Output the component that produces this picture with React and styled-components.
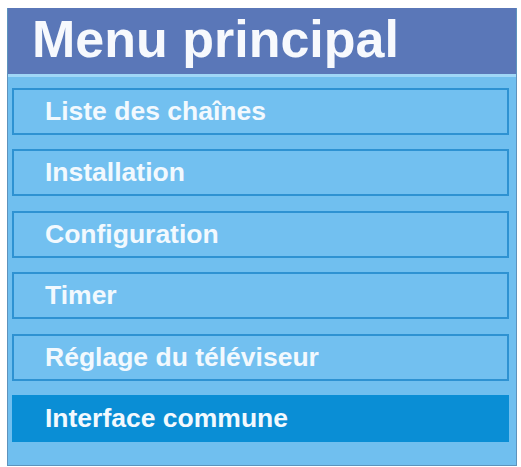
import React from "react";
import styled, { createGlobalStyle } from "styled-components";

const Global = createGlobalStyle`
  html, body { margin: 0; padding: 0; background: #ffffff; }
  body { font-family: "Liberation Sans", Arial, sans-serif; }
`;

const Page = styled.div`
  padding: 8px 0 0 7px;
`;

const Panel = styled.div`
  width: 510px;
  box-sizing: border-box;
  display: flex;
  flex-direction: column;
  background: #70bfef;
  border: 1px solid #5d93bd;
  border-top: none;
`;

const Header = styled.div`
  height: 66px;
  box-sizing: border-box;
  display: flex;
  align-items: center;
  padding: 0 0 4px 24px;
  background: #5a77b8;
  color: #f7f9fd;
  font-size: 52px;
  font-weight: 700;
  white-space: nowrap;
`;

const Divider = styled.div`
  height: 3px;
  background: #9fd7f7;
`;

const List = styled.div`
  display: flex;
  flex-direction: column;
  gap: 14.4px;
  padding: 11px 7px 23px 4px;
`;

const Item = styled.div`
  height: 47px;
  box-sizing: border-box;
  display: flex;
  align-items: center;
  padding-left: 31px;
  background: ${(p) => (p.$active ? "#0a8ed5" : "#72c0f0")};
  border: 2px solid ${(p) => (p.$active ? "#0a8ed5" : "#2e92d2")};
  color: #f2f9fe;
  font-size: 26.5px;
  font-weight: 700;
  white-space: nowrap;
`;

const items = [
  "Liste des chaînes",
  "Installation",
  "Configuration",
  "Timer",
  "Réglage du téléviseur",
  "Interface commune",
];

export default function App() {
  return (
    <>
      <Global />
      <Page>
        <Panel>
          <Header>Menu principal</Header>
          <Divider />
          <List>
            {items.map((t, i) => (
              <Item key={t} $active={i === items.length - 1}>
                {t}
              </Item>
            ))}
          </List>
        </Panel>
      </Page>
    </>
  );
}
